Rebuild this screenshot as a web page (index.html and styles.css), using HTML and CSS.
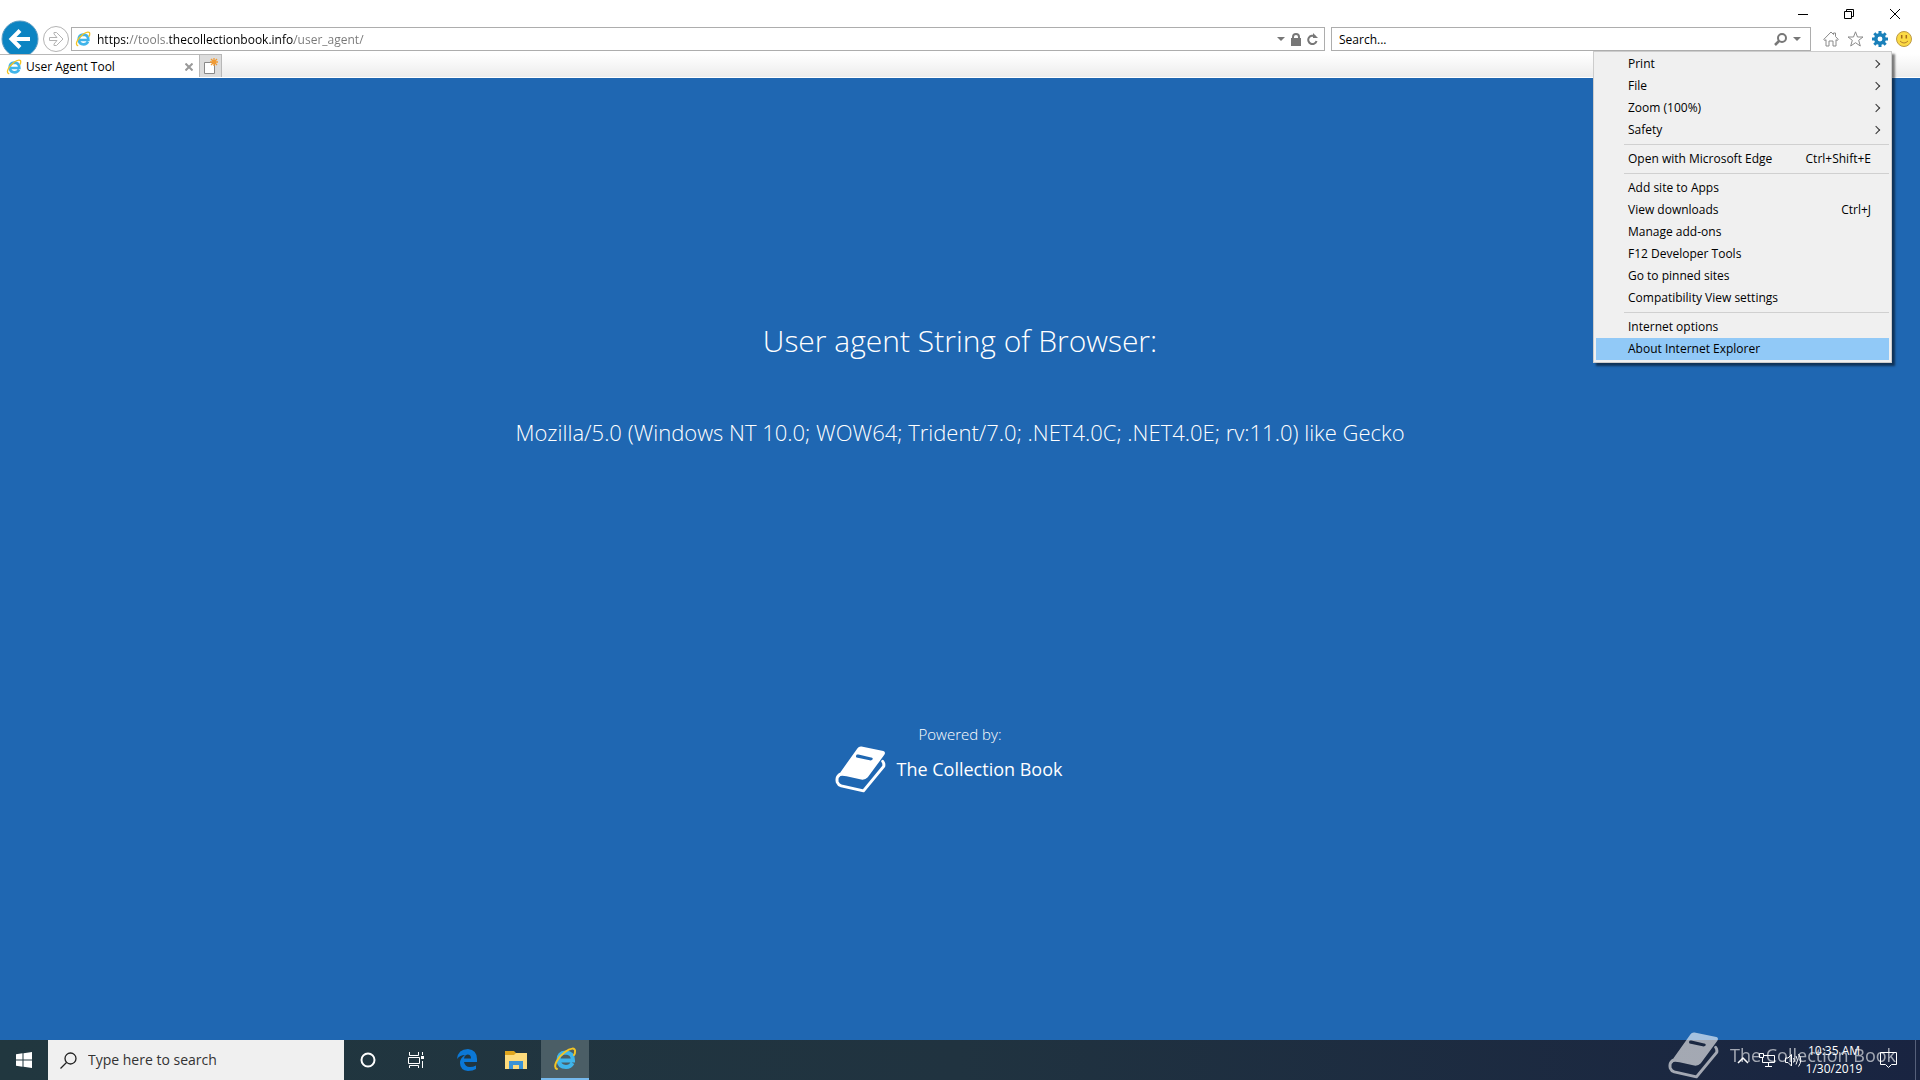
FILE: index.html
```html
<!doctype html>
<html lang="en">
  <head>
    <meta charset="UTF-8" />
    <meta name="viewport" content="width=device-width, initial-scale=1.0" />
    <title>User Agent Tool</title>
    <link rel="stylesheet" href="styles.css">
  </head>
  <body>
    <svg class="defs" aria-hidden="true">
      <symbol id="book" viewBox="70 100 160 150">
        <path fill="currentColor" fill-rule="evenodd" d="M141 112Q145 106 153 107L219 121Q227 124 222 132L172 200Q164 209 152 207L108 197Q92 193 84 198Q84 192 90 184ZM139 131Q134 136 138 140L181 149Q188 147 187 143L185 141L144 131Z"/>
        <path fill="none" stroke="currentColor" stroke-width="9" stroke-linejoin="round" stroke-linecap="round" d="M88 191Q76 200 80 215Q83 223 92 226L159 241L220 167Q222 158 217 152"/>
      </symbol>
      <symbol id="ie" viewBox="0 0 24 24">
        <path fill="none" stroke="#3fb4ea" stroke-width="4" d="M5.5 13.5H20Q20 5.500 12.500 5.500Q5.500 6 5.500 13Q6 20 13 20Q17.500 20 19.500 16"/>
        <path fill="none" stroke="#f3c425" stroke-width="2" stroke-linecap="round" d="M4 22C-1 20 5 10 12 5C17 1 23 0 22 5Q22 7 21 8"/>
      </symbol>
    </svg>

    <header class="browser">
      <div class="titlebar">
        <button aria-label="Minimize"><svg width="10" height="10" viewBox="0 0 10 10"><path d="M0 5.500H10"/></svg></button>
        <button aria-label="Restore"><svg width="10" height="10" viewBox="0 0 10 10"><path d="M.5 2.500H7.500V9.500H.5ZM2.500 2.500V.5H9.500V7.500H7.500"/></svg></button>
        <button aria-label="Close"><svg width="10" height="10" viewBox="0 0 10 10"><path d="M0 0L10 10M10 0L0 10"/></svg></button>
      </div>

      <div class="toolbar">
        <button class="back" aria-label="Back">
          <svg width="38" height="38" viewBox="0 0 38 38"><circle cx="19" cy="19" r="18" fill="#0c84c2" stroke="#5f9fc4"/><path d="M29 19H11M19 10.500L10.500 19L19 27.500" fill="none" stroke="#fff" stroke-width="4"/></svg>
        </button>
        <button class="forward" aria-label="Forward">
          <svg width="26" height="26" viewBox="0 0 26 26" fill="#fff" stroke="#b3b3b3"><circle cx="13" cy="13" r="12.500"/><path d="M6.500 11.500H14L11 8V6.500H13.500L20 13L13.500 19.500H11V18L14 14.500H6.500Z"/></svg>
        </button>
        <div class="field address">
          <svg width="16" height="16"><use href="#ie"/></svg>
          <input type="text" aria-label="Address" value="https://tools.thecollectionbook.info/user_agent/">
          <button aria-label="Show address history"><svg width="8" height="4" viewBox="0 0 8 4"><path d="M0 0H8L4 4Z" fill="#777"/></svg></button>
          <button aria-label="Security report"><svg width="10" height="13" viewBox="0 0 10 13"><path d="M0 5H10V13H0Z" fill="#777"/><path d="M2 6V4Q2 1 5 1T8 4V6" fill="none" stroke="#777" stroke-width="2"/></svg></button>
          <button aria-label="Refresh"><svg width="11" height="13" viewBox="0 0 11 13"><path d="M8 3.500A4.200 4.200 0 1 0 9.500 8" fill="none" stroke="#777" stroke-width="2"/><path d="M6 0L11 5H6Z" fill="#777"/></svg></button>
        </div>
        <div class="field search">
          <input type="text" aria-label="Search the web" placeholder="Search...">
          <button aria-label="Search"><svg width="13" height="13" viewBox="0 0 13 13"><circle cx="8" cy="5" r="4" fill="none" stroke="#777" stroke-width="2"/><path d="M5 8L1 12" stroke="#777" stroke-width="2.500"/></svg></button>
          <button aria-label="Search options"><svg width="8" height="4" viewBox="0 0 8 4"><path d="M0 0H8L4 4Z" fill="#777"/></svg></button>
        </div>
        <div class="tools">
          <button aria-label="Home"><svg width="16" height="16" viewBox="0 0 16 16" fill="#fff" stroke="#8a8a8a"><path d="M.7 8.500L8 1L10.500 3.500V2H12.500V5.500L15.300 8.500L14 9.500L13 8.700V15H10V10H6V15H3V8.700L2 9.500Z"/></svg></button>
          <button aria-label="Favorites"><svg width="17" height="16" viewBox="0 0 17 16" fill="#fff" stroke="#8a8a8a"><path d="M8.500 .8L10.500 6H16L11.700 9.300L13.300 15L8.500 11.700L3.700 15L5.300 9.300L1 6H6.500Z"/></svg></button>
          <button aria-label="Tools"><svg width="16" height="16" viewBox="0 0 16 16"><circle cx="8" cy="8" r="4.200" fill="none" stroke="#1a80ba" stroke-width="3.500"/><path d="M8 0V3M8 13V16M0 8H3M13 8H16M2.300 2.300L4.500 4.500M11.500 11.500L13.700 13.700M13.700 2.300L11.500 4.500M2.300 13.700L4.500 11.500" stroke="#1a80ba" stroke-width="3"/></svg></button>
          <button aria-label="Send feedback"><svg width="16" height="16" viewBox="0 0 16 16"><circle cx="8" cy="8" r="7.500" fill="#fbda45" stroke="#bd9a45"/><path d="M5.700 4V7.500M10.300 4V7.500" stroke="#a56b1c" stroke-width="1.500"/><path d="M4 10Q8 14 12 10" fill="none" stroke="#b7812b"/></svg></button>
        </div>
      </div>

      <nav class="tabs" aria-label="Tabs">
        <div class="tab">
          <svg width="16" height="16"><use href="#ie"/></svg>
          <a href="#top">User Agent Tool</a>
          <button aria-label="Close tab"><svg width="8" height="8" viewBox="0 0 8 8"><path d="M.5 .5L7.500 7.500M7.500 .5L.5 7.500" stroke="#999" stroke-width="2"/></svg></button>
        </div>
        <button class="new-tab" aria-label="New tab">
          <svg width="16" height="18" viewBox="0 0 16 18"><path d="M1.500 5.500H11.500V16.500H1.500Z" fill="#fff" stroke="#888"/><path d="M11 1V9M7 5H15M8 2L14 8M14 2L8 8" stroke="#f19a32" stroke-width="1.300"/></svg>
        </button>
      </nav>

      <div class="menu">
        <button>Print<span class="arrow"></span></button>
        <button>File<span class="arrow"></span></button>
        <button>Zoom (100%)<span class="arrow"></span></button>
        <button>Safety<span class="arrow"></span></button>
        <hr>
        <button>Open with Microsoft Edge<span>Ctrl+Shift+E</span></button>
        <hr>
        <button>Add site to Apps</button>
        <button>View downloads<span>Ctrl+J</span></button>
        <button>Manage add-ons</button>
        <button>F12 Developer Tools</button>
        <button>Go to pinned sites</button>
        <button>Compatibility View settings</button>
        <hr>
        <button>Internet options</button>
        <button class="active">About Internet Explorer</button>
      </div>
    </header>

    <main id="top">
      <h1>User agent String of Browser:</h1>
      <p class="agent">Mozilla/5.0 (Windows NT 10.0; WOW64; Trident/7.0; .NET4.0C; .NET4.0E; rv:11.0) like Gecko</p>
      <footer>
        <p>Powered by:</p>
        <a class="brand" href="#top"><svg width="53" height="50"><use href="#book"/></svg>The Collection Book</a>
      </footer>
    </main>

    <div class="taskbar">
      <button class="task" aria-label="Start"><svg width="16" height="16" viewBox="0 0 16 16" fill="#fff"><path d="M0 2.200L6.500 1.300V7.500H0ZM7.500 1.200L16 0V7.500H7.500ZM0 8.500H6.500V14.700L0 13.800ZM7.500 8.500H16V16L7.500 14.800Z"/></svg></button>
      <label class="taskbar-search">
        <svg width="17" height="17" viewBox="0 0 17 17" fill="none" stroke="#222" stroke-width="1.300"><circle cx="10.500" cy="6.500" r="5.500"/><path d="M6.500 10.500L.5 16.500"/></svg>
        <input type="text" aria-label="Type here to search" placeholder="Type here to search">
      </label>
      <button class="task" aria-label="Cortana"><svg width="16" height="16" viewBox="0 0 16 16"><circle cx="8" cy="8" r="6.500" fill="none" stroke="#fff" stroke-width="2"/></svg></button>
      <button class="task" aria-label="Task view"><svg width="17" height="16" viewBox="0 0 17 16" fill="none" stroke="#fff"><path d="M1.500 0V3.500H10.500V0M.5 5.500H11.500V11.500H.5ZM1.500 16V13.500H10.500V16M14.500 0V3M14.500 9V16"/><path d="M13 4H16V7H13Z" fill="#fff" stroke="none"/></svg></button>
      <div class="pinned">
        <button class="task" aria-label="Microsoft Edge"><svg width="20" height="22" viewBox="0 0 20 22"><path fill="#0b78d7" d="M0 10Q1 0 11 0Q20 1 20 10V13H7Q8 18 13 18Q16 18 19 16.500V20Q16 22 11 22Q3 21 3 14Q3 9 8 6Q3 6 0 10ZM7 9.500H14Q14 5.500 10.500 5.500Q7.500 6 7 9.500Z"/></svg></button>
        <button class="task" aria-label="File Explorer"><svg width="22" height="18" viewBox="0 0 22 18"><path d="M0 0H9L11 2H21V17H0Z" fill="#dfa51d"/><path d="M0 4H9L11 2H22V18H0Z" fill="#fddb7c"/><path d="M4 18V10H18V18H14V14H8V18Z" fill="#3b93d6"/></svg></button>
        <button class="task open" aria-label="Internet Explorer"><svg width="24" height="24"><use href="#ie"/></svg></button>
      </div>
      <div class="tray">
        <button aria-label="Show hidden icons"><svg width="12" height="8" viewBox="0 0 12 8"><path d="M1 7L6 2L11 7" fill="none" stroke="#fff" stroke-width="1.500"/></svg></button>
        <button aria-label="Network"><svg width="16" height="14" viewBox="0 0 16 14" fill="none" stroke="#fff"><path d="M5 2.500H15.500V9.500H3.500V5M9.500 9.500V13M6 13.500H13M.5 .5H4.500V4.500H.5Z"/></svg></button>
        <button class="volume" aria-label="Volume"><svg width="17" height="14" viewBox="0 0 17 14" fill="none" stroke="#fff"><path d="M.5 5V9.500H3L6.500 13V1.500L3 5ZM8.500 5Q10 7 8.500 9.500M11 3Q14 7 11 11.500M13.500 1Q18 7 13.500 13.500"/></svg></button>
        <button class="clock"><time>10:35 AM</time><time>1/30/2019</time></button>
        <button class="action" aria-label="Action center"><svg width="17" height="17" viewBox="0 0 17 17"><path d="M.5 .5H16.500V12.500H11.500L8.500 15.500L5.500 12.500H.5Z" fill="none" stroke="#fff"/></svg></button>
        <button class="show-desktop" aria-label="Show desktop"></button>
      </div>
    </div>

    <div class="watermark"><svg width="53" height="50"><use href="#book"/></svg>The Collection Book</div>
  </body>
</html>
```
FILE: styles.css
```css
* {
  margin: 0;
  padding: 0;
  box-sizing: border-box;
}

body {
  display: flex;
  flex-direction: column;
  min-height: 100vh;
  position: relative;
  overflow-x: hidden;
  font-family: 'Open Sans', 'Noto Sans', sans-serif;
  font-size: 12px;
  line-height: 16px;
  color: #000;
  background: #1f67b2;
}

button,
input {
  border: 0;
  background: none;
  font: inherit;
  color: inherit;
  outline: none;
}

button {
  display: flex;
  align-items: center;
  justify-content: center;
}

a {
  color: inherit;
  text-decoration: none;
}

svg {
  display: block;
  flex-shrink: 0;
}

.defs {
  position: absolute;
  width: 0;
  height: 0;
}

/* browser chrome */
.browser {
  position: relative;
  background: #fff;
}

.titlebar {
  display: flex;
  justify-content: flex-end;
  height: 27px;
  padding-right: 2px;
}

.titlebar button {
  width: 46px;
}

.titlebar path {
  fill: none;
  stroke: #000;
}

.toolbar {
  display: flex;
  height: 24px;
}

.back {
  width: 40px;
}

.forward {
  width: 31px;
}

.field {
  display: flex;
  align-items: center;
  border: 1px solid #adadad;
}

.field input {
  flex: 1;
  min-width: 0;
  padding-top: 2px;
}

.address {
  flex: 1;
  gap: 6px;
  padding: 0 6px 0 3px;
}

.address input {
  background: linear-gradient(90deg, #000 31px, #777 31px, #777 72px, #000 72px, #000 197px, #777 197px);
  -webkit-background-clip: text;
  background-clip: text;
  -webkit-text-fill-color: transparent;
}

.search {
  width: 25%;
  margin-left: 6px;
  padding: 0 9px 0 7px;
  gap: 6px;
}

.search input::placeholder {
  color: #000;
}

.tools {
  display: flex;
  align-items: center;
  gap: 8px;
  padding: 0 8px 0 12px;
}

.tabs {
  position: relative;
  display: flex;
  height: 24px;
  margin-top: 3px;
  background: linear-gradient(#fff, #ececec);
  border-bottom: 1px solid #fff;
}

.tab {
  display: flex;
  align-items: center;
  gap: 4px;
  width: 200px;
  padding: 1px 4px 0 6px;
  background: #fff;
  border: 1px solid #b8b8b8;
  border-width: 1px 1px 0 0;
}

.tab a {
  flex: 1;
}

.tab button {
  padding: 2px;
}

.new-tab {
  width: 22px;
  background: #dcdcdc;
  border: 1px solid #b8b8b8;
  border-width: 1px 1px 0 0;
}

/* tools menu */
.menu {
  position: absolute;
  z-index: 2;
  top: 51px;
  right: 28px;
  width: 299px;
  padding: 1px 2px 2px;
  background: #f0f0f0;
  border: 1px solid #ccc;
  box-shadow: 3px 3px 2px rgba(0, 0, 0, 0.5);
}

.menu button {
  justify-content: space-between;
  width: 100%;
  height: 22px;
  padding: 0 18px 0 32px;
}

.menu button.active {
  background: #91c9f7;
}

.menu hr {
  margin: 3px 0 3px 28px;
  border: 0;
  border-top: 1px solid #d0d0d0;
}

.arrow {
  width: 6px;
  height: 6px;
  margin-right: -8px;
  border: solid #333;
  border-width: 1px 1px 0 0;
  transform: rotate(45deg);
}

/* page */
main {
  flex: 1;
  display: flex;
  flex-direction: column;
  align-items: center;
  padding-top: 241px;
  color: #fff;
}

h1 {
  font-size: 30px;
  line-height: 44px;
  font-weight: 300;
}

.agent {
  margin-top: 53px;
  font-size: 22px;
  line-height: 32px;
  font-weight: 300;
}

footer {
  display: flex;
  flex-direction: column;
  align-items: center;
  margin-top: 276px;
  font-size: 15px;
  line-height: 20px;
  font-weight: 300;
}

.brand {
  display: flex;
  align-items: center;
  gap: 10px;
  padding-right: 24px;
  font-size: 18px;
  line-height: 24px;
  font-weight: 400;
}

/* taskbar */
.taskbar {
  display: flex;
  height: 40px;
  background: linear-gradient(90deg, #21373f, #203340 50%, #192441);
  color: #fff;
}

.task {
  width: 48px;
}

.taskbar-search {
  display: flex;
  align-items: center;
  gap: 11px;
  width: 296px;
  padding-left: 12px;
  background: #f0f0f0;
  color: #222;
  font-size: 14px;
  line-height: 20px;
}

.taskbar-search input {
  flex: 1;
  min-width: 0;
}

.taskbar-search input::placeholder {
  color: #333;
}

.pinned {
  display: flex;
  gap: 1px;
  margin-left: 3px;
}

.task.open {
  background: #4b5e66;
  border-bottom: 2px solid #76b9ed;
}

.tray {
  display: flex;
  margin-left: auto;
}

.tray button {
  width: 24px;
}

.tray .volume {
  width: 28px;
}

.tray .clock {
  flex-direction: column;
  width: 54px;
  line-height: 18px;
}

.tray .action {
  width: 54px;
}

.tray .show-desktop {
  width: 5px;
  border-left: 1px solid #56607a;
}

.watermark {
  position: absolute;
  right: 24px;
  bottom: 0;
  display: flex;
  align-items: center;
  gap: 10px;
  font-size: 18px;
  line-height: 24px;
  color: #fff;
  opacity: 0.6;
  pointer-events: none;
}
```
